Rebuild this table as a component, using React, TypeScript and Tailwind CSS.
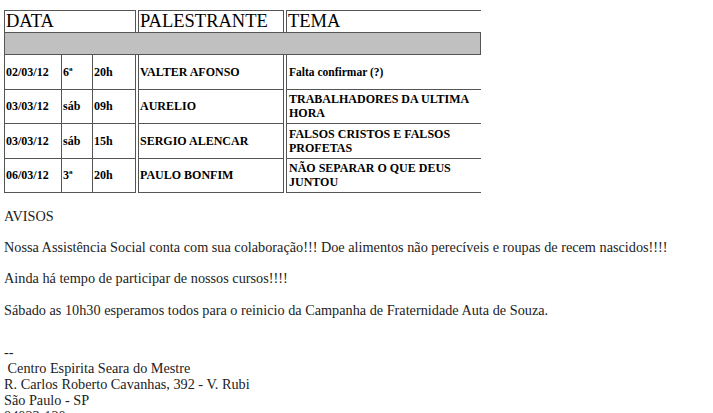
const rows = [
  { date: "02/03/12", day: "6ª", hour: "20h", name: "VALTER AFONSO", tema: "Falta confirmar (?)", small: true },
  { date: "03/03/12", day: "sáb", hour: "09h", name: "AURELIO", tema: "TRABALHADORES DA ULTIMA HORA" },
  { date: "03/03/12", day: "sáb", hour: "15h", name: "SERGIO ALENCAR", tema: "FALSOS CRISTOS E FALSOS PROFETAS" },
  { date: "06/03/12", day: "3ª", hour: "20h", name: "PAULO BONFIM", tema: "NÃO SEPARAR O QUE DEUS JUNTOU" },
];

const App = () => {
  return (
    <div className="h-[413px] overflow-hidden bg-white text-black font-['Liberation_Serif','Times_New_Roman',serif]">
      {/* Escala */}
      <div className="pt-[10px] pl-[4px] w-[481px]">
        <div className="flex h-[22px] text-[18.5px] leading-[21px]">
          <div className="w-[132px] border-t border-x border-[#555] pl-[1px]">DATA</div>
          <div className="ml-[2px] w-[146px] border-t border-x border-[#555] pl-[1px]">PALESTRANTE</div>
          <div className="ml-[2px] flex-1 border-t border-l border-[#555] pl-[1px]">TEMA</div>
        </div>
        <div className="h-[23px] bg-[#c0c0c0] border border-[#555]" />
        {rows.map((r, i) => (
          <div key={i} className="flex h-[34.5px] text-[12px] font-bold leading-[14px]">
            <div className="w-[132px] flex border-x border-b border-[#555]">
              <div className="w-[57px] border-r border-[#555] pl-[1px] flex items-center">{r.date}</div>
              <div className="w-[31px] border-r border-[#555] pl-[1px] flex items-center">{r.day}</div>
              <div className="flex-1 pl-[1px] flex items-center">{r.hour}</div>
            </div>
            <div className="ml-[2px] w-[146px] border-x border-b border-[#555] pl-[1px] flex items-center">
              {r.name}
            </div>
            <div
              className={`ml-[2px] flex-1 border-l border-b border-[#555] pl-[2px] pr-[4px] flex items-center ${
                r.small ? "text-[11.5px]" : ""
              }`}
            >
              {r.tema}
            </div>
          </div>
        ))}
      </div>

      {/* Avisos */}
      <div className="pl-[4px] pt-[15px] text-[14.25px] leading-[16px] text-[#222]">
        <p>AVISOS</p>
        <p className="mt-[15px]">
          Nossa Assistência Social conta com sua colaboração!!! Doe alimentos não perecíveis e roupas de recem nascidos!!!!
        </p>
        <p className="mt-[15px]">Ainda há tempo de participar de nossos cursos!!!!</p>
        <p className="mt-[16px]">Sábado as 10h30 esperamos todos para o reinicio da Campanha de Fraternidade Auta de Souza.</p>
        <div className="mt-[26px]">
          <p>--</p>
          <p>&nbsp;Centro Espirita Seara do Mestre</p>
          <p>R. Carlos Roberto Cavanhas, 392 - V. Rubi</p>
          <p>São Paulo - SP</p>
          <p>04023-120</p>
        </div>
      </div>
    </div>
  );
};

export default App;
